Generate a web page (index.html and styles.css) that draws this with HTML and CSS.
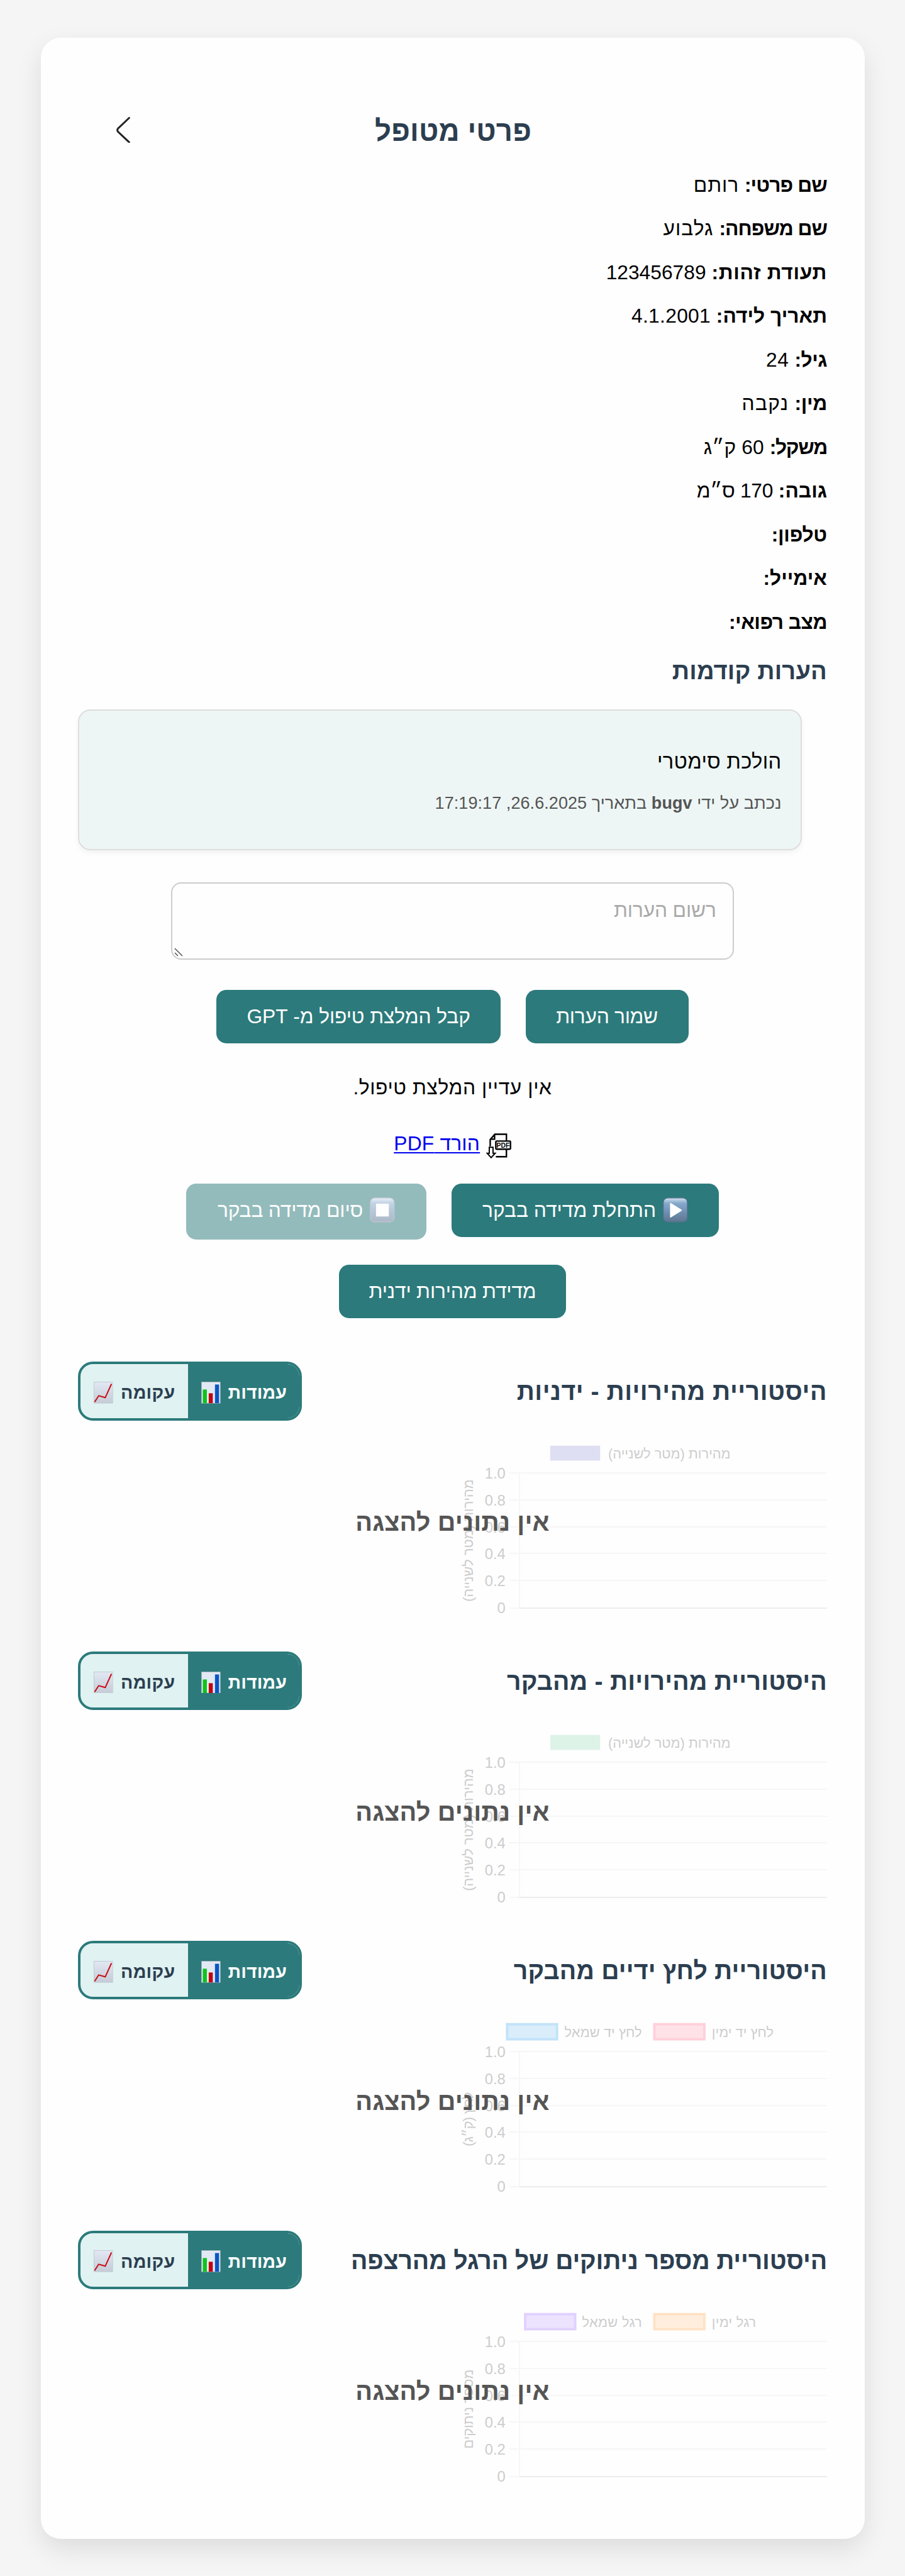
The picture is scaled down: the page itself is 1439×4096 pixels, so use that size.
FILE: index.html
```
<!DOCTYPE html>
<html lang="he" dir="rtl">
<head>
<meta charset="utf-8">
<title>פרטי מטופל</title>
<link rel="stylesheet" href="styles.css">
</head>
<body>
<svg width="0" height="0" class="defs" aria-hidden="true">
  <defs>
    <linearGradient id="key" x1="0" y1="0" x2="0" y2="1">
      <stop offset="0" stop-color="#d5e4f0"/><stop offset=".22" stop-color="#86a9cb"/><stop offset=".55" stop-color="#7192b5"/><stop offset="1" stop-color="#5d7690"/>
    </linearGradient>
    <linearGradient id="paper" x1="0" y1="0" x2="0" y2="1">
      <stop offset="0" stop-color="#e2e8f3"/><stop offset="1" stop-color="#c5ccd6"/>
    </linearGradient>
    <symbol id="bars" viewBox="0 0 31 35">
      <rect x=".5" y=".5" width="30" height="34" fill="#e3e9f4" stroke="#aab4bd"/>
      <rect x="2.5" y="12.5" width="6.5" height="22" fill="#0dc41c"/>
      <rect x="12" y="18.5" width="6.5" height="16" fill="#c00410"/>
      <rect x="22" y="4.5" width="6.5" height="30" fill="#0a55c4"/>
    </symbol>
    <symbol id="curve" viewBox="0 0 31 35">
      <rect x=".5" y=".5" width="30" height="34" fill="url(#paper)" stroke="#bfcad0"/>
      <path d="M1.5 32.5 8 22.5 18.5 25.5 28.5 3.5" fill="none" stroke="#c80a14" stroke-width="2"/>
    </symbol>
    <g id="grid" shape-rendering="crispEdges">
      <path d="M91 84H600M91 127H600M91 170H600M91 213H600M91 256H600M91 300H107M107 84V300" fill="none" stroke="#f6f6f6" stroke-width="2"/>
      <path d="M107 300H600" stroke="#ededed" stroke-width="2"/>
    </g>
    <g id="scale" class="scale">
      <text x="84.5" y="92.5">1.0</text><text x="84.5" y="136">0.8</text><text x="84.5" y="179">0.6</text>
      <text x="84.5" y="222">0.4</text><text x="84.5" y="265">0.2</text><text x="84.5" y="308.5">0</text>
    </g>
  </defs>
</svg>
<main class="card">
  <header class="top">
    <h1>פרטי מטופל</h1>
    <button class="back" aria-label="חזרה"><svg viewBox="0 0 22 42"><path d="M20.5 1.5 2.500 18.5Q.800 21 2.500 23.500L20.500 40.500" fill="none" stroke="#222" stroke-width="3" stroke-linecap="round"/></svg></button>
  </header>

  <section class="details">
    <p class="first-name"><b>שם פרטי:</b> <span>רותם</span></p>
    <p class="last-name"><b>שם משפחה:</b> <span>גלבוע</span></p>
    <p class="id-number"><b>תעודת זהות:</b> <span>123456789</span></p>
    <p class="birth"><b>תאריך לידה:</b> <span>4.1.2001</span></p>
    <p class="age"><b>גיל:</b> <span>24</span></p>
    <p class="sex"><b>מין:</b> <span>נקבה</span></p>
    <p class="weight"><b>משקל:</b> <span>60 ק״ג</span></p>
    <p class="height"><b>גובה:</b> <span>170 ס״מ</span></p>
    <p class="phone"><b>טלפון:</b></p>
    <p class="email"><b>אימייל:</b></p>
    <p class="condition"><b>מצב רפואי:</b></p>
  </section>

  <h3>הערות קודמות</h3>
  <article class="note">
    <p class="body">הולכת סימטרי</p>
    <p class="meta">נכתב על ידי <b>bugv</b> בתאריך 26.6.2025, 17:19:17</p>
  </article>

  <div class="field">
    <div class="placeholder">רשום הערות</div>
    <svg class="grip" viewBox="0 0 14 14"><path d="M1 1 13 13M1 8 6 13" stroke="#555" stroke-width="1.500"/></svg>
  </div>

  <div class="actions">
    <button class="btn save">שמור הערות</button>
    <button class="btn gpt">קבל המלצת טיפול מ- GPT</button>
  </div>

  <p class="advice">אין עדיין המלצת טיפול.</p>

  <div class="pdf">
    <svg viewBox="0 0 40 40" fill="none" stroke="#000" stroke-width="2.400">
      <path d="M6.500 21V10L14 1.500H32.500V12M32.500 26V37.500H15.500M6.500 9.500H13.500V2"/>
      <rect x="15.500" y="12.500" width="23.500" height="13" rx="1.500" fill="#fff"/>
      <path d="M5 22.500H11V32H14.500L8 39 1.500 32H5Z" fill="#fff" stroke-width="2"/>
      <text x="27.200" y="22.800" class="tag">PDF</text>
    </svg>
    <a href="#">הורד PDF</a>
  </div>

  <div class="actions walker">
    <button class="btn start">
      <svg viewBox="0 0 40 40"><rect x=".8" y=".8" width="38.400" height="38.400" rx="7" fill="url(#key)" stroke="#56708f" stroke-width="1.200"/><path d="M11.500 9.500V31.500Q11.500 33 13 32L30 21.500Q31 20.500 30 19.700L13 9Q11.500 8.200 11.500 9.500Z" fill="#fff"/></svg>
      <span>התחלת מדידה בבקר</span>
    </button>
    <button class="btn stop" disabled>
      <svg viewBox="0 0 40 40"><rect x=".8" y=".8" width="38.400" height="38.400" rx="7" fill="url(#key)" stroke="#8a8fae" stroke-width="1.200"/><rect x="10" y="10" width="20.500" height="20.500" fill="#fff"/></svg>
      <span>סיום מדידה בבקר</span>
    </button>
  </div>
  <div class="actions manual">
    <button class="btn speed">מדידת מהירות ידנית</button>
  </div>

  <section class="history manual-speed">
    <div class="head">
      <h2>היסטוריית מהירויות - ידניות</h2>
      <div class="toggle"><button class="on"><span>עמודות</span><svg><use href="#bars"/></svg></button><button><span>עקומה</span><svg><use href="#curve"/></svg></button></div>
    </div>
    <div class="chart">
      <svg viewBox="0 0 600 370">
        <rect x="156" y="40" width="80" height="24" fill="#dfdff3"/>
        <text x="445" y="60" textLength="196">מהירות (מטר לשנייה)</text>
        <use href="#grid"/><use href="#scale"/>
        <text class="axis" transform="translate(32 192) rotate(-90)" textLength="196">מהירות (מטר לשנייה)</text>
      </svg>
      <div class="empty">אין נתונים להצגה</div>
    </div>
  </section>

  <section class="history walker-speed">
    <div class="head">
      <h2>היסטוריית מהירויות - מהבקר</h2>
      <div class="toggle"><button class="on"><span>עמודות</span><svg><use href="#bars"/></svg></button><button><span>עקומה</span><svg><use href="#curve"/></svg></button></div>
    </div>
    <div class="chart">
      <svg viewBox="0 0 600 370">
        <rect x="156" y="40" width="80" height="24" fill="#def3e8"/>
        <text x="445" y="60" textLength="196">מהירות (מטר לשנייה)</text>
        <use href="#grid"/><use href="#scale"/>
        <text class="axis" transform="translate(32 192) rotate(-90)" textLength="196">מהירות (מטר לשנייה)</text>
      </svg>
      <div class="empty">אין נתונים להצגה</div>
    </div>
  </section>

  <section class="history pressure">
    <div class="head">
      <h2>היסטוריית לחץ ידיים מהבקר</h2>
      <div class="toggle"><button class="on"><span>עמודות</span><svg><use href="#bars"/></svg></button><button><span>עקומה</span><svg><use href="#curve"/></svg></button></div>
    </div>
    <div class="chart">
      <svg viewBox="0 0 600 370">
        <rect x="87" y="40" width="80" height="24" fill="#daedfb" stroke="#c3e3f9" stroke-width="4"/>
        <text x="303" y="60" textLength="124">לחץ יד שמאל</text>
        <rect x="323" y="40" width="80" height="24" fill="#ffe2e8" stroke="#ffd0da" stroke-width="4"/>
        <text x="514" y="60" textLength="99">לחץ יד ימין</text>
        <use href="#grid"/><use href="#scale"/>
        <text class="axis" transform="translate(32 192) rotate(-90)" textLength="87">לחץ (ק״ג)</text>
      </svg>
      <div class="empty">אין נתונים להצגה</div>
    </div>
  </section>

  <section class="history lifts">
    <div class="head">
      <h2>היסטוריית מספר ניתוקים של הרגל מהרצפה</h2>
      <div class="toggle"><button class="on"><span>עמודות</span><svg><use href="#bars"/></svg></button><button><span>עקומה</span><svg><use href="#curve"/></svg></button></div>
    </div>
    <div class="chart">
      <svg viewBox="0 0 600 370">
        <rect x="116" y="40" width="80" height="24" fill="#ece4ff" stroke="#e0d1ff" stroke-width="4"/>
        <text x="303" y="60" textLength="96">רגל שמאל</text>
        <rect x="323" y="40" width="80" height="24" fill="#ffeedd" stroke="#ffe2c6" stroke-width="4"/>
        <text x="486" y="60" textLength="71">רגל ימין</text>
        <use href="#grid"/><use href="#scale"/>
        <text class="axis" transform="translate(32 192) rotate(-90)" textLength="127">מספר ניתוקים</text>
      </svg>
      <div class="empty">אין נתונים להצגה</div>
    </div>
  </section>
</main>
</body>
</html>
```

FILE: styles.css
```
:root { --u: .99235px; }
* { box-sizing: border-box; }
body {
  margin: 0;
  padding: calc(60 * var(--u)) calc(65 * var(--u)) 0;
  min-height: 4096px;
  background: #f5f5f5;
  color: #000;
  font-family: "Liberation Sans", sans-serif;
  font-size: calc(32 * var(--u));
}
h1, h2, h3, p { margin: 0; white-space: nowrap; }
svg { display: block; flex: none; }
button { font: inherit; color: inherit; border: 0; padding: 0; background: none; white-space: nowrap; }
.defs { position: absolute; }

.card {
  height: calc(4008 * var(--u));
  padding: calc(120 * var(--u)) calc(60 * var(--u)) 0;
  border-radius: calc(32 * var(--u));
  background: #fefefe;
  box-shadow: 0 16px 40px rgba(0, 0, 0, .1);
}

.top { display: grid; grid-template-columns: 1fr auto 1fr; height: calc(60 * var(--u)); margin-bottom: calc(22 * var(--u)); }
.top h1 { grid-column: 2; color: #2c3e50; font-size: calc(46 * var(--u)); line-height: calc(60 * var(--u)); letter-spacing: .1px; padding-left: 2px; }
.back { justify-self: end; align-self: start; margin: calc(7 * var(--u)) 0 0 calc(61.500 * var(--u)); }
.back svg { width: calc(22 * var(--u)); height: calc(42 * var(--u)); }

.details p { line-height: calc(70 * var(--u)); height: calc(70 * var(--u)); }
.first-name b { letter-spacing: -.9px; }
.first-name span { letter-spacing: .9px; }
.last-name b { letter-spacing: -1px; }
.last-name span { letter-spacing: 1.1px; }
.id-number b { letter-spacing: .7px; }
.birth span { letter-spacing: .3px; }
.age b { letter-spacing: -.5px; }
.age span { letter-spacing: .7px; }
.sex b { letter-spacing: -.3px; }
.sex span { letter-spacing: 1.4px; }
.weight b { letter-spacing: -1.3px; }
.weight span { letter-spacing: .1px; }
.height span { letter-spacing: -.35px; }
.phone b { letter-spacing: -.25px; }
.condition b { letter-spacing: -.5px; }

h3 { margin: calc(18.700 * var(--u)) 0 calc(36.600 * var(--u)); color: #2c3e50; font-size: calc(38.400 * var(--u)); line-height: calc(50 * var(--u)); letter-spacing: .13px; }
.note {
  height: calc(225 * var(--u));
  margin-right: calc(40 * var(--u));
  padding: calc(55.600 * var(--u)) calc(31 * var(--u)) 0;
  border: 2px solid #dedede;
  border-radius: calc(20 * var(--u));
  background: #eef6f5;
  box-shadow: 0 4px 8px rgba(0, 0, 0, .05);
}
.note .body { font-size: calc(33 * var(--u)); line-height: calc(50 * var(--u)); letter-spacing: .29px; }
.note .meta { margin-top: calc(23 * var(--u)); color: #555; font-size: calc(27.200 * var(--u)); line-height: calc(40 * var(--u)); letter-spacing: .08px; }

.field {
  position: relative;
  width: calc(901 * var(--u));
  height: calc(124 * var(--u));
  margin: calc(52 * var(--u)) auto 0;
  padding: calc(23 * var(--u)) calc(26 * var(--u));
  border: 2px solid #ccc;
  border-radius: calc(16 * var(--u));
  color: #a9a9a9;
  line-height: calc(40 * var(--u));
  letter-spacing: -.18px;
}
.grip { position: absolute; left: 3px; bottom: 3px; width: 14px; height: 14px; }

.actions { display: flex; justify-content: center; align-items: flex-start; gap: calc(40 * var(--u)); margin-top: calc(48 * var(--u)); }
.btn {
  display: flex; justify-content: center; align-items: center; gap: calc(11 * var(--u));
  height: calc(86 * var(--u));
  border-radius: calc(16 * var(--u));
  background: #2c7a7b;
  color: #fff;
  line-height: calc(86 * var(--u));
}
.save { width: calc(261 * var(--u)); letter-spacing: -.3px; }
.gpt { width: calc(455 * var(--u)); letter-spacing: -.09px; }
.start { width: calc(429 * var(--u)); }
.stop { width: calc(385 * var(--u)); height: calc(90 * var(--u)); padding-bottom: calc(4 * var(--u)); opacity: .5; letter-spacing: -.18px; }
.speed { width: calc(364 * var(--u)); letter-spacing: -.17px; }
.btn svg { width: calc(40 * var(--u)); height: calc(40 * var(--u)); }
.walker { margin-top: calc(43 * var(--u)); }
.manual { margin-top: calc(40 * var(--u)); }

.advice { margin-top: calc(51 * var(--u)); line-height: calc(40 * var(--u)); text-align: center; letter-spacing: .6px; }
.pdf { display: flex; justify-content: center; gap: calc(10 * var(--u)); height: calc(40 * var(--u)); margin-top: calc(50 * var(--u)); line-height: calc(40 * var(--u)); }
.pdf svg { width: calc(40 * var(--u)); height: calc(40 * var(--u)); margin-top: calc(3 * var(--u)); }
.pdf a { color: #0000ee; text-decoration: underline; text-decoration-thickness: 2px; text-underline-offset: 3px; letter-spacing: .2px; }
.tag { font: bold 10.500px "Liberation Sans", sans-serif; text-anchor: middle; direction: ltr; fill: #000; stroke: none; }

.history { height: calc(464 * var(--u)); }
.manual + .history { margin-top: calc(70 * var(--u)); }
.head { display: flex; justify-content: space-between; height: calc(94 * var(--u)); }
.head h2 { color: #2c3e50; font-size: calc(39.500 * var(--u)); line-height: calc(96 * var(--u)); }
.manual-speed h2 { letter-spacing: .52px; }
.walker-speed h2 { letter-spacing: .22px; }
.pressure h2 { letter-spacing: .18px; }
.lifts h2 { letter-spacing: -.16px; }
.toggle { display: flex; width: calc(359 * var(--u)); border: 4px solid #2c7a7b; border-radius: calc(24 * var(--u)); overflow: hidden; background: #e0f2f1; color: #2c3e50; }
.toggle button { display: flex; flex: 1; gap: calc(12 * var(--u)); padding-right: calc(20.500 * var(--u)); font-size: calc(28.800 * var(--u)); font-weight: bold; line-height: calc(92.500 * var(--u)); letter-spacing: .25px; }
.toggle .on { flex: none; width: calc(179 * var(--u)); background: #2c7a7b; color: #fff; letter-spacing: .1px; }
.toggle svg { width: calc(31 * var(--u)); height: calc(35 * var(--u)); margin-top: calc(28 * var(--u)); }

.chart { position: relative; }
.chart > svg { width: calc(600 * var(--u)); height: calc(370 * var(--u)); }
.chart text { direction: rtl; fill: #cdcdcd; font-size: 22px; }
.scale text { direction: ltr; text-anchor: end; fill: #cdcdcd; font-size: 24px; }
.chart .axis { text-anchor: middle; }
.empty { position: absolute; top: calc(139.800 * var(--u)); left: 0; right: 0; color: #555; font-size: calc(40 * var(--u)); font-weight: bold; line-height: calc(48 * var(--u)); letter-spacing: .15px; text-align: center; }
```
